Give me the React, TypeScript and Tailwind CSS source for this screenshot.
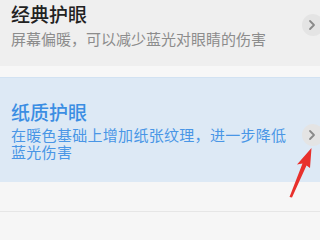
const FONT = { fontFamily: '"Noto Sans CJK SC", "Noto Sans", sans-serif' };

const Chevron = ({ top }: { top: string }) => (
  <div className={`absolute right-[-4px] ${top} flex h-[22px] w-[22px] items-center justify-center rounded-full bg-[#e4e4e4]`}>
    <svg width="10" height="12" viewBox="0 0 10 12" className="mr-[2px]">
      <path d="M3 2 L7 6 L3 10" fill="none" stroke="#8a8a8a" strokeWidth="1.8" strokeLinecap="round" strokeLinejoin="round" />
    </svg>
  </div>
);

export default function App() {
  return (
    <div className="relative h-[240px] w-[320px] overflow-hidden bg-[#f6f6f6]" style={FONT}>
      <section className="relative h-[66px] bg-[#efefef] pl-[11px] pt-[1px]">
        <h2 className="text-[19px] font-medium leading-[26px] text-[#222222]">经典护眼</h2>
        <p className="mt-[3px] text-[15px] leading-[18px] text-[#8c8c8c]">屏幕偏暖，可以减少蓝光对眼睛的伤害</p>
        <Chevron top="top-[14px]" />
      </section>
      <div className="h-[11px] bg-[#f7f7f7]" />
      <section className="relative h-[105px] border-t border-[#d2e2f2] bg-[#dde9f5] pl-[11px] pt-[21px]">
        <h2 className="text-[19px] font-medium leading-[26px] text-[#3b8ee3]">纸质护眼</h2>
        <p className="mt-[1px] w-[290px] text-[15px] leading-[17px] tracking-[0.3px] text-[#4996e6]">
          在暖色基础上增加纸张纹理，进一步降低蓝光伤害
        </p>
        <Chevron top="top-[46px]" />
      </section>
      <div className="h-[29px] bg-[#f6f6f6]" />
      <div className="h-[1px] bg-[#e6e6e6]" />
      <svg className="absolute left-0 top-0" width="320" height="240" viewBox="0 0 320 240">
        <path d="M311.5 148 L297 164.5 L302.5 163.5 L289.5 197 L292 197.5 L306.5 165.5 L310 168 Z" fill="#e8302c" />
      </svg>
    </div>
  );
}
